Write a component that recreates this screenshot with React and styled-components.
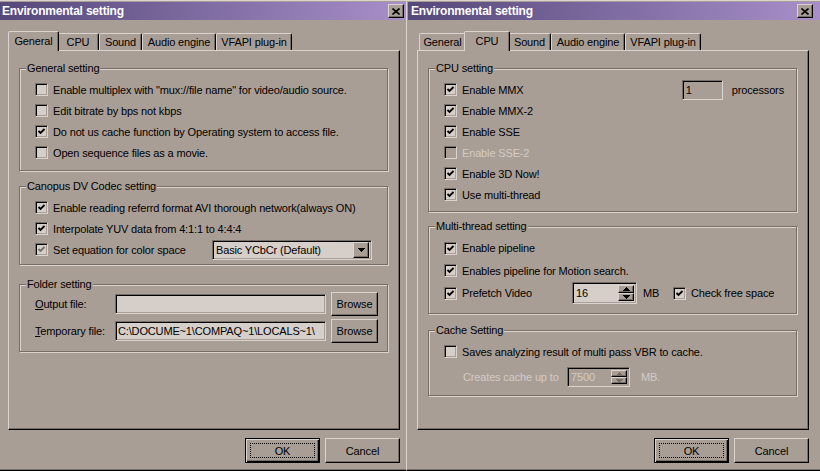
import React from "react";
import styled, { createGlobalStyle, css } from "styled-components";

const c = {
  face: "#a99e96",
  light: "#dbd3cd",
  shadow: "#776e68",
  dark: "#000000",
  field: "#d6cec8",
  grey: "#d3cbc5",
};

const GlobalStyle = createGlobalStyle`
  html, body {
    margin: 0;
    padding: 0;
    background: ${c.face};
  }
  body {
    width: 820px;
    height: 471px;
    overflow: hidden;
    font-family: "Liberation Sans", Arial, sans-serif;
    font-size: 11px;
    letter-spacing: -0.15px;
    color: #000;
  }
  * { box-sizing: border-box; }
`;

const raised = css`
  border: 1px solid;
  border-color: ${c.light} ${c.dark} ${c.dark} ${c.light};
  box-shadow: inset -1px -1px 0 ${c.shadow};
  background: ${c.face};
`;

const sunken = css`
  border: 1px solid;
  border-color: ${c.shadow} ${c.light} ${c.light} ${c.shadow};
  box-shadow: inset 1px 1px 0 ${c.dark}, inset -1px -1px 0 ${c.face};
`;

const Screen = styled.div`
  display: flex;
  width: 820px;
  height: 471px;
  overflow: hidden;
`;

const Window = styled.div`
  flex: none;
  display: flex;
  flex-direction: column;
  width: ${(p) => p.$w}px;
  height: 471px;
  background: ${c.face};
  border-top: 1px solid ${c.light};
  border-left: ${(p) => (p.$edge ? `1px solid ${c.light}` : "none")};
  border-bottom: 1px solid ${c.dark};
  box-shadow: inset 0 -1px 0 ${c.shadow};
  padding: 1px 0 0 ${(p) => (p.$edge ? 1 : 0)}px;
`;

const TitleBar = styled.div`
  display: flex;
  align-items: center;
  justify-content: space-between;
  height: 18px;
  padding: 0 ${(p) => p.$pr}px 0 ${(p) => p.$pl}px;
  background: linear-gradient(to right, #55487a, #a88fc9);
  color: #fff;
  font-weight: bold;
  font-size: 12px;
  letter-spacing: -0.2px;
`;

const CloseBtn = styled.div`
  ${raised};
  display: flex;
  align-items: center;
  justify-content: center;
  width: 16px;
  height: 14px;
`;

const Body = styled.div`
  display: flex;
  flex-direction: column;
  padding: 11px 0 0 ${(p) => p.$pl}px;
`;

const TabRow = styled.div`
  display: flex;
  align-items: flex-end;
  height: 19px;
  padding-left: 2px;
`;

const Tab = styled.div`
  position: relative;
  display: flex;
  align-items: center;
  justify-content: center;
  width: ${(p) => p.$w + (p.$active ? 4 : 0)}px;
  height: ${(p) => (p.$active ? 20 : 17)}px;
  margin: ${(p) => (p.$active ? "0 -2px -1px" : "0")};
  padding-bottom: ${(p) => (p.$active ? 2 : 0)}px;
  z-index: ${(p) => (p.$active ? 2 : 1)};
  background: ${c.face};
  border: 1px solid;
  border-bottom: none;
  border-color: ${c.light} ${c.dark} transparent ${c.light};
  border-radius: 2px 2px 0 0;
  box-shadow: inset -1px 0 0 ${c.shadow};
  white-space: nowrap;
`;

const Pane = styled.div`
  display: flex;
  flex-direction: column;
  width: 392px;
  height: 380px;
  padding: 11px 11px 0 10px;
  border: 1px solid;
  border-color: ${c.light} ${c.dark} ${c.dark} ${c.light};
  box-shadow: inset -1px -1px 0 ${c.shadow};
`;

const Group = styled.fieldset`
  margin: ${(p) => p.$mt || 0}px 0 0 0;
  padding: ${(p) => p.$pt ?? 4}px ${(p) => p.$pr ?? 0}px ${(p) => p.$pb ?? 6}px 15px;
  border: 1px solid ${c.shadow};
  box-shadow: inset 1px 1px 0 ${c.light}, 1px 1px 0 ${c.light};
  min-inline-size: 0;
`;

const Legend = styled.legend`
  position: relative;
  margin-left: -9px;
  padding: 0 1px;
  line-height: 12px;
  background: ${c.face};
`;

const Row = styled.div`
  display: flex;
  align-items: center;
  height: ${(p) => p.$h || 21}px;
  margin-top: ${(p) => p.$mt || 0}px;
  padding-left: ${(p) => p.$indent || 0}px;
  white-space: nowrap;
`;

const CheckLabel = styled.label`
  display: flex;
  align-items: center;
  gap: 5px;
  width: ${(p) => (p.$w ? `${p.$w}px` : "auto")};
  flex: none;
  color: ${(p) => (p.$disabled ? c.grey : "#000")};
`;

const Box = styled.span`
  ${sunken};
  display: flex;
  align-items: center;
  justify-content: center;
  width: 13px;
  height: 13px;
  flex: none;
  background: ${(p) => (p.$disabled ? c.face : c.field)};
`;

const Check = ({ checked, disabled, grey, children, w }) => (
  <CheckLabel $disabled={disabled} $w={w}>
    <Box $disabled={disabled}>
      {checked && (
        <svg width="9" height="9" viewBox="0 0 9 9">
          <polyline
            points="1.5,4 3.5,6 7.5,2"
            fill="none"
            stroke={grey ? c.shadow : "#000"}
            strokeWidth="1.8"
          />
        </svg>
      )}
    </Box>
    <span>{children}</span>
  </CheckLabel>
);

const Text = styled.span`
  flex: none;
  width: ${(p) => (p.$w ? `${p.$w}px` : "auto")};
  margin-left: ${(p) => p.$ml || 0}px;
  color: ${(p) => (p.$disabled ? c.grey : "#000")};
`;

const Field = styled.div`
  ${sunken};
  display: flex;
  align-items: center;
  flex: none;
  width: ${(p) => p.$w}px;
  height: ${(p) => p.$h || 20}px;
  margin-left: ${(p) => (p.$auto ? "auto" : `${p.$ml || 0}px`)};
  padding: 0 0 0 ${(p) => p.$pl ?? 3}px;
  background: ${(p) => (p.$flat ? c.face : c.field)};
  color: ${(p) => (p.$disabled ? c.grey : "#000")};
  overflow: hidden;
  white-space: nowrap;
`;

const FieldText = styled.span`
  flex: 1;
  overflow: hidden;
`;

const DropBtn = styled.div`
  ${raised};
  display: flex;
  align-items: center;
  justify-content: center;
  width: 16px;
  height: 16px;
  margin: 0 2px 0 0;
  flex: none;
`;

const SpinCol = styled.div`
  display: flex;
  flex-direction: column;
  align-self: stretch;
  width: 16px;
  margin: 2px 2px 2px 0;
  flex: none;
`;

const SpinBtn = styled.div`
  ${raised};
  flex: 1;
  display: flex;
  align-items: center;
  justify-content: center;
`;

const Arrow = ({ up, color = "#000" }) => (
  <svg width="7" height="4" viewBox="0 0 7 4" shapeRendering="crispEdges">
    <path d={up ? "M0 4h7L3.5 0z" : "M0 0h7L3.5 4z"} fill={color} />
  </svg>
);

const Spinner = ({ value, w, h, ml, disabled }) => (
  <Field $w={w} $h={h} $ml={ml} $flat={disabled} $disabled={disabled}>
    <FieldText>{value}</FieldText>
    <SpinCol>
      <SpinBtn>
        <Arrow up color={disabled ? c.shadow : "#000"} />
      </SpinBtn>
      <SpinBtn>
        <Arrow color={disabled ? c.shadow : "#000"} />
      </SpinBtn>
    </SpinCol>
  </Field>
);

const Button = styled.div`
  ${raised};
  display: flex;
  align-items: center;
  justify-content: center;
  width: ${(p) => p.$w}px;
  height: ${(p) => p.$h}px;
  margin-left: ${(p) => p.$ml || 0}px;
  flex: none;
  ${(p) =>
    p.$default &&
    css`
      border: 1px solid ${c.dark};
      box-shadow: inset 1px 1px 0 ${c.light}, inset -1px -1px 0 ${c.dark},
        inset -2px -2px 0 ${c.shadow};
    `}
`;

const Focus = styled.span`
  display: flex;
  align-items: center;
  justify-content: center;
  width: calc(100% - 8px);
  height: calc(100% - 8px);
  border: 1px dotted #000;
`;

const ButtonRow = styled.div`
  display: flex;
  justify-content: flex-end;
  gap: 5px;
  width: 392px;
  margin-top: 8px;
`;

const Key = styled.u`
  text-decoration: underline;
`;

const XGlyph = () => (
  <svg width="8" height="7" viewBox="0 0 8 7">
    <path d="M0.5 0.5L7.5 6.5M7.5 0.5L0.5 6.5" stroke="#000" strokeWidth="1.6" />
  </svg>
);

const tabs = [
  ["General", 47],
  ["CPU", 42],
  ["Sound", 43],
  ["Audio engine", 74],
  ["VFAPI plug-in", 76],
];

const Dialog = ({ w, edge, padL, titlePad, closePad, active, children }) => (
  <Window $w={w} $edge={edge}>
    <TitleBar $pl={titlePad} $pr={closePad}>
      <span>Environmental setting</span>
      <CloseBtn>
        <XGlyph />
      </CloseBtn>
    </TitleBar>
    <Body $pl={padL}>
      <TabRow>
        {tabs.map(([name, tw]) => (
          <Tab key={name} $w={tw} $active={name === active}>
            {name}
          </Tab>
        ))}
      </TabRow>
      <Pane>{children}</Pane>
      <ButtonRow>
        <Button $w={75} $h={25} $default>
          <Focus>OK</Focus>
        </Button>
        <Button $w={75} $h={25}>
          Cancel
        </Button>
      </ButtonRow>
    </Body>
  </Window>
);

const GeneralPage = () => (
  <>
    <Group $pt={5} $pb={7}>
      <Legend>General setting</Legend>
      <Row>
        <Check>Enable multiplex with "mux://file name" for video/audio source.</Check>
      </Row>
      <Row>
        <Check>Edit bitrate by bps not kbps</Check>
      </Row>
      <Row>
        <Check checked>Do not us cache function by Operating system to access file.</Check>
      </Row>
      <Row>
        <Check>Open sequence files as a movie.</Check>
      </Row>
    </Group>
    <Group $mt={9} $pt={5} $pb={4} $pr={15}>
      <Legend>Canopus DV Codec setting</Legend>
      <Row>
        <Check checked>Enable reading referrd format AVI thorough network(always ON)</Check>
      </Row>
      <Row>
        <Check checked>Interpolate YUV data from 4:1:1 to 4:4:4</Check>
      </Row>
      <Row>
        <Check checked grey>
          Set equation for color space
        </Check>
        <Field $w={160} $auto>
          <FieldText>Basic YCbCr (Default)</FieldText>
          <DropBtn>
            <Arrow />
          </DropBtn>
        </Field>
      </Row>
    </Group>
    <Group $mt={13} $pt={2} $pb={8}>
      <Legend>Folder setting</Legend>
      <Row $h={24}>
        <Text $w={80}>
          <Key>O</Key>utput file:
        </Text>
        <Field $w={211} />
        <Button $w={47} $h={24} $ml={5}>
          Browse
        </Button>
      </Row>
      <Row $h={24} $mt={3}>
        <Text $w={80}>
          <Key>T</Key>emporary file:
        </Text>
        <Field $w={211} $pl={2}>
          <FieldText>C:\DOCUME~1\COMPAQ~1\LOCALS~1\</FieldText>
        </Field>
        <Button $w={47} $h={24} $ml={5}>
          Browse
        </Button>
      </Row>
    </Group>
  </>
);

const CpuPage = () => (
  <>
    <Group $pt={5} $pb={6} $pr={12}>
      <Legend>CPU setting</Legend>
      <Row>
        <Check checked>Enable MMX</Check>
        <Field $w={41} $auto $flat>
          1
        </Field>
        <Text $ml={9}>processors</Text>
      </Row>
      <Row>
        <Check checked>Enable MMX-2</Check>
      </Row>
      <Row>
        <Check checked>Enable SSE</Check>
      </Row>
      <Row>
        <Check disabled>Enable SSE-2</Check>
      </Row>
      <Row>
        <Check checked>Enable 3D Now!</Check>
      </Row>
      <Row>
        <Check checked>Use multi-thread</Check>
      </Row>
    </Group>
    <Group $mt={8} $pt={5} $pb={9}>
      <Legend>Multi-thread setting</Legend>
      <Row $h={22}>
        <Check checked>Enable pipeline</Check>
      </Row>
      <Row $h={23}>
        <Check checked>Enables pipeline for Motion search.</Check>
      </Row>
      <Row $h={22}>
        <Check checked w={128}>
          Prefetch Video
        </Check>
        <Spinner value="16" w={65} h={22} />
        <Text $w={30} $ml={6}>
          MB
        </Text>
        <Check checked>Check free space</Check>
      </Row>
    </Group>
    <Group $mt={10} $pt={5} $pb={7}>
      <Legend>Cache Setting</Legend>
      <Row>
        <Check>Saves analyzing result of multi pass VBR to cache.</Check>
      </Row>
      <Row $h={22} $mt={4} $indent={19}>
        <Text $w={104} $disabled>
          Creates cache up to
        </Text>
        <Spinner value="7500" w={63} h={20} disabled />
        <Text $ml={11} $disabled>
          MB.
        </Text>
      </Row>
    </Group>
  </>
);

export default function App() {
  return (
    <>
      <GlobalStyle />
      <Screen>
        <Dialog w={406} padL={8} titlePad={2} closePad={2} active="General">
          <GeneralPage />
        </Dialog>
        <Dialog w={414} edge padL={9} titlePad={3} closePad={7} active="CPU">
          <CpuPage />
        </Dialog>
      </Screen>
    </>
  );
}
